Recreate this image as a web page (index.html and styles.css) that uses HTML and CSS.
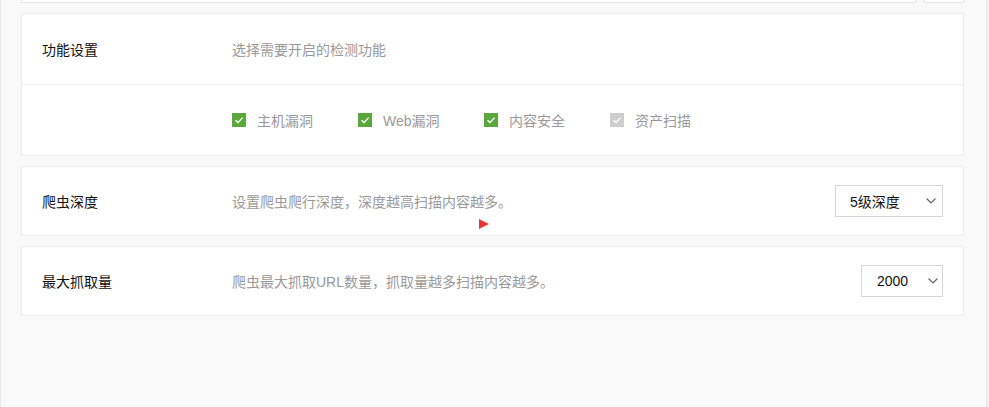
FILE: index.html
```html
<!DOCTYPE html>
<html lang="zh-CN">
<head>
    <meta charset="UTF-8">
    <title>扫描设置</title>
    <link rel="stylesheet" href="styles.css">
</head>
<body>
    <div class="main">
        <div class="top-bar">
            <div class="top-input"></div>
            <div class="top-btn"></div>
        </div>

        <div class="card">
            <div class="row">
                <div class="row-label">功能设置</div>
                <div class="row-desc">选择需要开启的检测功能</div>
            </div>
            <div class="row row-divided">
                <div class="row-label"></div>
                <div class="check-list">
                    <label class="check-item">
                        <span class="check-box checked">
                            <svg width="14" height="14" viewBox="0 0 14 14"><polyline points="3.5,7.2 6,9.6 10.6,4.6" fill="none" stroke="#fff" stroke-width="1.4"/></svg>
                        </span>
                        主机漏洞
                    </label>
                    <label class="check-item">
                        <span class="check-box checked">
                            <svg width="14" height="14" viewBox="0 0 14 14"><polyline points="3.5,7.2 6,9.6 10.6,4.6" fill="none" stroke="#fff" stroke-width="1.4"/></svg>
                        </span>
                        Web漏洞
                    </label>
                    <label class="check-item">
                        <span class="check-box checked">
                            <svg width="14" height="14" viewBox="0 0 14 14"><polyline points="3.5,7.2 6,9.6 10.6,4.6" fill="none" stroke="#fff" stroke-width="1.4"/></svg>
                        </span>
                        内容安全
                    </label>
                    <label class="check-item">
                        <span class="check-box disabled">
                            <svg width="14" height="14" viewBox="0 0 14 14"><polyline points="3.5,7.2 6,9.6 10.6,4.6" fill="none" stroke="#fff" stroke-width="1.4"/></svg>
                        </span>
                        资产扫描
                    </label>
                </div>
            </div>
        </div>

        <div class="card card-single">
            <div class="row">
                <div class="row-label">爬虫深度</div>
                <div class="row-desc">设置爬虫爬行深度，深度越高扫描内容越多。</div>
                <div class="select select-depth">
                    <span>5级深度</span>
                    <svg width="10" height="6" viewBox="0 0 10 6"><polyline points="0.5,0.5 5,5 9.5,0.5" fill="none" stroke="#666" stroke-width="1.2"/></svg>
                </div>
            </div>
            <span class="marker"></span>
        </div>

        <div class="card card-single">
            <div class="row">
                <div class="row-label">最大抓取量</div>
                <div class="row-desc">爬虫最大抓取URL数量，抓取量越多扫描内容越多。</div>
                <div class="select select-count">
                    <span>2000</span>
                    <svg width="10" height="6" viewBox="0 0 10 6"><polyline points="0.5,0.5 5,5 9.5,0.5" fill="none" stroke="#666" stroke-width="1.2"/></svg>
                </div>
            </div>
        </div>
    </div>
</body>
</html>
```

FILE: styles.css
```css
* {
    margin: 0;
    padding: 0;
    box-sizing: border-box;
}

body {
    font-family: "Liberation Sans", "Noto Sans CJK SC", sans-serif;
    font-size: 14px;
    background: #f2f2f2;
    height: 407px;
    overflow: hidden;
}

.main {
    width: 987px;
    height: 407px;
    background: #f9f9f9;
    border-left: 1px solid #e8e8e8;
    border-right: 1px solid #e8e8e8;
    padding: 0 22px 0 20px;
}

.top-bar {
    display: flex;
    gap: 8px;
    height: 3px;
    margin-bottom: 10px;
}

.top-input,
.top-btn {
    background: #fff;
    border: 1px solid #e5e5e5;
    border-top: none;
}

.top-input {
    flex: 1;
}

.top-btn {
    width: 40px;
}

.card {
    background: #fff;
    border: 1px solid #ebebeb;
    margin-bottom: 10px;
    position: relative;
}

.row {
    display: flex;
    align-items: center;
    height: 70px;
    padding: 0 20px;
}

.card-single .row {
    height: 68px;
}

.row-divided {
    height: 71px;
    border-top: 1px solid #ebebeb;
}

.row-label {
    width: 190px;
    flex-shrink: 0;
    color: #111;
}

.row-desc {
    flex: 1;
    color: #999;
}

.check-list {
    display: flex;
    align-items: center;
}

.check-item {
    display: flex;
    align-items: center;
    width: 126px;
    color: #999;
}

.check-box {
    display: flex;
    width: 14px;
    height: 14px;
    margin-right: 11px;
}

.check-box.checked {
    background: #5aa83c;
}

.check-box.disabled {
    background: #cdcdcd;
}

.select {
    display: flex;
    align-items: center;
    justify-content: space-between;
    height: 32px;
    padding: 0 6px 0 14px;
    border: 1px solid #d6d6d6;
    color: #111;
    background: #fff;
}

.select-depth {
    width: 108px;
}

.select-count {
    width: 82px;
    padding-left: 15px;
    padding-right: 4px;
}

.marker {
    position: absolute;
    left: 457px;
    top: 52px;
    width: 0;
    height: 0;
    border-top: 5px solid transparent;
    border-bottom: 5px solid transparent;
    border-left: 10px solid #f2323a;
}
```
